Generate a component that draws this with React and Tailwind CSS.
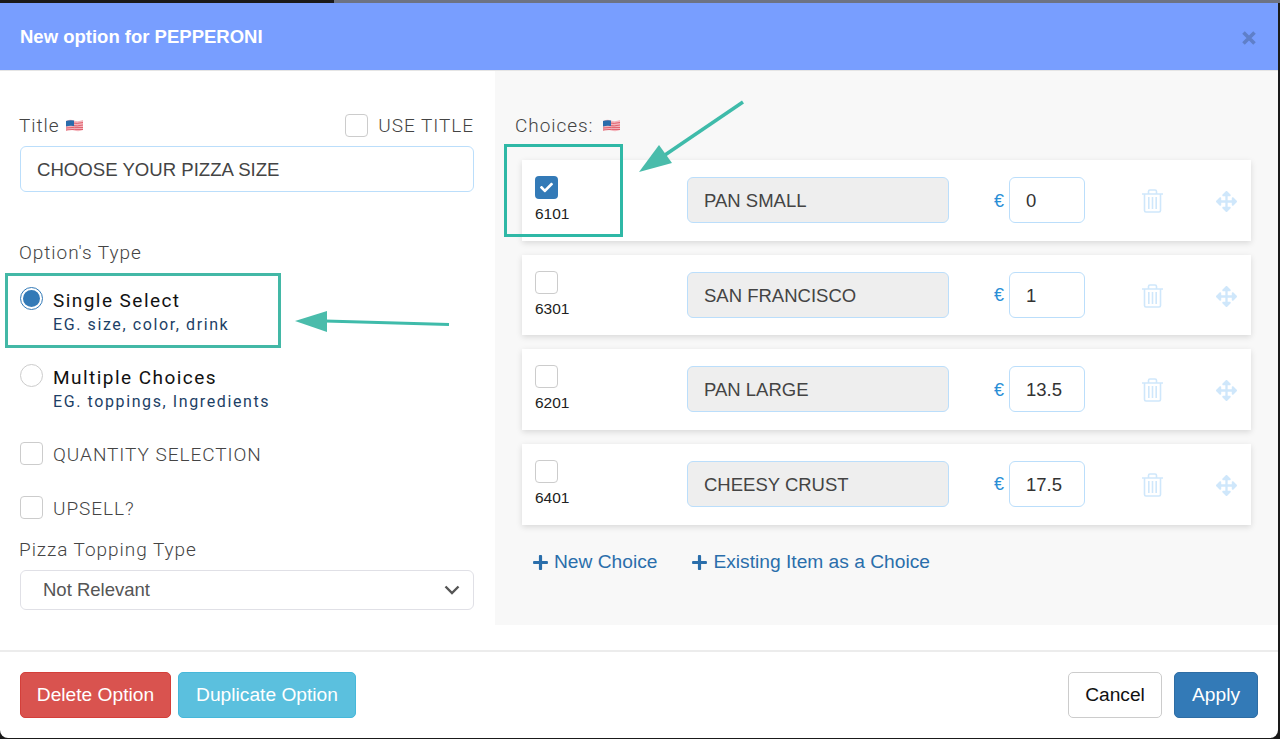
import React from "react";
import { FaArrowsAlt, FaCheck, FaPlus } from "react-icons/fa";

const choices = [
  { id: "6101", name: "PAN SMALL", price: "0", checked: true },
  { id: "6301", name: "SAN FRANCISCO", price: "1" },
  { id: "6201", name: "PAN LARGE", price: "13.5" },
  { id: "6401", name: "CHEESY CRUST", price: "17.5" },
];

function Flag() {
  return (
    <svg width="17" height="13" viewBox="0 0 17 13" className="shrink-0">
      <path d="M0 2 Q4 0 8 1.5 T17 1 V11 Q13 13 8 11.5 T0 12 Z" fill="#f4b6bd" />
      <path d="M6 4 Q11 5 17 3.5 M6 6.5 Q11 7.5 17 6 M0 9 Q8 8 17 8.5 M0 11 Q8 10 17 10.5" stroke="#e0616e" strokeWidth="1" fill="none" />
      <path d="M0 2 Q3 1 8 1.5 V7 Q3 6.5 0 7.5 Z" fill="#2a6cab" />
    </svg>
  );
}

function Trash() {
  return (
    <svg width="21" height="24" viewBox="0 0 21 24" fill="none" stroke="#cfe7fb" strokeWidth="1.6">
      <path d="M0 5 H21 M6.5 5 V2.5 Q6.5 1 8 1 H13 Q14.5 1 14.5 2.5 V5" />
      <path d="M2.5 5 V21.5 Q2.5 23 4 23 H17 Q18.5 23 18.5 21.5 V5" />
      <path d="M6.8 8 V20 M10.5 8 V20 M14.2 8 V20" />
    </svg>
  );
}

function Box({ checked }) {
  if (checked) {
    return (
      <span className="flex h-[23px] w-[23px] shrink-0 items-center justify-center rounded-[4px] bg-[#337ab7] text-white">
        <FaCheck size={13} />
      </span>
    );
  }
  return <span className="block h-[23px] w-[23px] shrink-0 rounded-[4px] border border-[#ccc] bg-white" />;
}

function Radio({ title, sub, checked }) {
  return (
    <div className="flex h-[77px] items-start">
      {checked ? (
        <span className="flex h-[23px] w-[23px] shrink-0 items-center justify-center rounded-full border border-[#337ab7] bg-white">
          <span className="h-[17px] w-[17px] rounded-full bg-[#337ab7]" />
        </span>
      ) : (
        <span className="block h-[23px] w-[23px] shrink-0 rounded-full border border-[#ccc] bg-white" />
      )}
      <div className="ml-[10px] pt-[1px]">
        <div className="h-[24px] text-[19px] leading-[26px] tracking-[1.45px] text-[#111]">{title}</div>
        <div className="mt-[3px] text-[16px] leading-[20px] tracking-[1.6px] text-[#1d3f66]">{sub}</div>
      </div>
    </div>
  );
}

function Label({ children, className = "" }) {
  return <div className={`h-[24px] text-[19px] font-light leading-[26px] tracking-[0.95px] text-[#444] ${className}`}>{children}</div>;
}

function ChoiceRow({ choice }) {
  return (
    <div className="flex h-[80.67px] bg-white pl-[13px] shadow-[0_2px_6px_rgba(0,0,0,0.13)]">
      <div className="w-[152px] pt-[16px]">
        <Box checked={choice.checked} />
        <div className="mt-[5px] text-[15.5px] leading-[20px] text-[#222]">{choice.id}</div>
      </div>
      <div className="mt-[17px] flex h-[46px] w-[262px] items-center rounded-[6px] border border-[#bbdefb] bg-[#eeeeee] pl-[16px] pt-[2px] text-[18.5px] text-[#444]">
        {choice.name}
      </div>
      <div className="ml-[45px] mt-[17px] flex h-[46px] w-[20px] items-center pt-[2px] text-[18px] text-[#2a8fd6]">€</div>
      <div className="ml-[-5px] mt-[17px] flex h-[46px] w-[76px] items-center rounded-[6px] border border-[#bbdefb] bg-white pl-[16px] pt-[2px] text-[18.5px] text-[#333]">
        {choice.price}
      </div>
      <div className="ml-[57px] mt-[29px]">
        <Trash />
      </div>
      <div className="ml-[53px] mt-[31px] text-[#cfe7fb]">
        <FaArrowsAlt size={21} />
      </div>
    </div>
  );
}

export default function App() {
  return (
    <div className="relative h-[739px] w-[1280px] overflow-hidden bg-[#1a1a1a] pt-[3px] font-['Roboto','Liberation_Sans',sans-serif]">
      <div className="absolute left-[334px] top-0 h-[3px] w-[946px] bg-[#6d7383]" />
      <div className="relative flex h-[735px] w-[1278px] flex-col overflow-hidden rounded-b-[8px] bg-white font-['Liberation_Sans',sans-serif]">
        {/* Header */}
        <div className="flex h-[68px] shrink-0 items-center justify-between border-b border-[#e5e5e5] bg-[#789eff] pl-[20px] pr-[22px]">
          <span className="text-[18.5px] font-bold text-white">New option for PEPPERONI</span>
          <svg width="14" height="14" viewBox="0 0 14 14" stroke="#5f7fc9" strokeWidth="3.6" fill="none" className="mt-[2px]">
            <path d="M1.5 1.5 L12.5 12.5 M12.5 1.5 L1.5 12.5" />
          </svg>
        </div>

        {/* Body */}
        <div className="flex h-[579px] shrink-0">
          <div className="w-[495px] shrink-0 pl-[20px] pr-[21px] pt-[42px] font-['Roboto','Liberation_Sans',sans-serif]">
            <div className="flex items-center justify-between">
              <div className="-ml-px flex items-center gap-[6px]">
                <Label>Title</Label>
                <Flag />
              </div>
              <div className="flex items-center gap-[10px]">
                <Box />
                <Label>USE TITLE</Label>
              </div>
            </div>
            <div className="mt-[9px] flex h-[46px] items-center rounded-[6px] border border-[#bbdefb] bg-white pl-[16px] pt-[1px] font-['Liberation_Sans',sans-serif] text-[18.6px] text-[#444]">
              CHOOSE YOUR PIZZA SIZE
            </div>
            <Label className="-ml-px mt-[48px]">Option's Type</Label>
            <div className="mt-[23px]">
              <Radio title="Single Select" sub="EG. size, color, drink" checked />
              <Radio title="Multiple Choices" sub="EG. toppings, Ingredients" />
            </div>
            <div className="flex items-center gap-[10px]">
              <Box />
              <Label className="pt-[1px]">QUANTITY SELECTION</Label>
            </div>
            <div className="mt-[30px] flex items-center gap-[10px]">
              <Box />
              <Label className="pt-[1px]">UPSELL?</Label>
            </div>
            <Label className="-ml-px mt-[18px]">Pizza Topping Type</Label>
            <div className="mt-[9px] flex h-[40px] items-center justify-between rounded-[6px] border border-[#e0e0e6] bg-white pl-[22px] pr-[13px] font-['Liberation_Sans',sans-serif] text-[18.5px] text-[#555]">
              Not Relevant
              <svg width="16" height="10" viewBox="0 0 16 10" fill="none" stroke="#555" strokeWidth="2.4">
                <path d="M1.5 1.5 L8 8 L14.5 1.5" />
              </svg>
            </div>
          </div>

          <div className="h-[554px] flex-1 bg-[#f8f8f8] pl-[20px] pr-[27px] pt-[42px]">
            <div className="flex items-center gap-[9px] font-['Roboto','Liberation_Sans',sans-serif]">
              <Label>Choices:</Label>
              <Flag />
            </div>
            <div className="ml-[7px] mt-[23px] flex flex-col gap-[14px]">
              {choices.map((c) => (
                <ChoiceRow key={c.id} choice={c} />
              ))}
            </div>
            <div className="ml-[17px] mt-[26px] flex h-[24px] items-center text-[19.2px] text-[#2a6eab]">
              <FaPlus size={17} />
              <span className="ml-[5px]">New Choice</span>
              <FaPlus size={17} className="ml-[34px]" />
              <span className="ml-[5px]">Existing Item as a Choice</span>
            </div>
          </div>
        </div>

        {/* Footer */}
        <div className="flex flex-1 items-start justify-between border-t-2 border-[#ececec] pl-[20px] pr-[20px] pt-[20px] text-[19.2px]">
          <div className="flex gap-[7px]">
            <button className="h-[46px] w-[151px] rounded-[5px] border border-[#d43f3a] bg-[#d9534f] pt-[1px] text-white">Delete Option</button>
            <button className="h-[46px] w-[178px] rounded-[5px] border border-[#46b8da] bg-[#5bc0de] pt-[1px] text-white">Duplicate Option</button>
          </div>
          <div className="flex gap-[12px]">
            <button className="h-[46px] w-[94px] rounded-[5px] border border-[#ccc] bg-white pt-[1px] text-[#111]">Cancel</button>
            <button className="h-[46px] w-[84px] rounded-[5px] border border-[#2e6da4] bg-[#337ab7] pt-[1px] text-white">Apply</button>
          </div>
        </div>
      </div>

      {/* Tutorial annotations over the screenshot */}
      <div className="absolute left-[5px] top-[273px] h-[75px] w-[276px] border-[3px] border-[#43b8a6]" />
      <div className="absolute left-[504px] top-[144px] h-[93px] w-[119px] border-[3px] border-[#2fb8a6]" />
      <svg className="absolute left-0 top-0" width="1280" height="739" fill="none">
        <path d="M449 324.5 L325 321" stroke="#3fbbaa" strokeWidth="3" />
        <path d="M295 321 L327 311 L327 332 Z" fill="#4abcab" />
        <path d="M743 102 L662 157" stroke="#3fbbaa" strokeWidth="3.5" />
        <path d="M639 172 L659 145 L672 163 Z" fill="#4abcab" />
      </svg>
    </div>
  );
}
